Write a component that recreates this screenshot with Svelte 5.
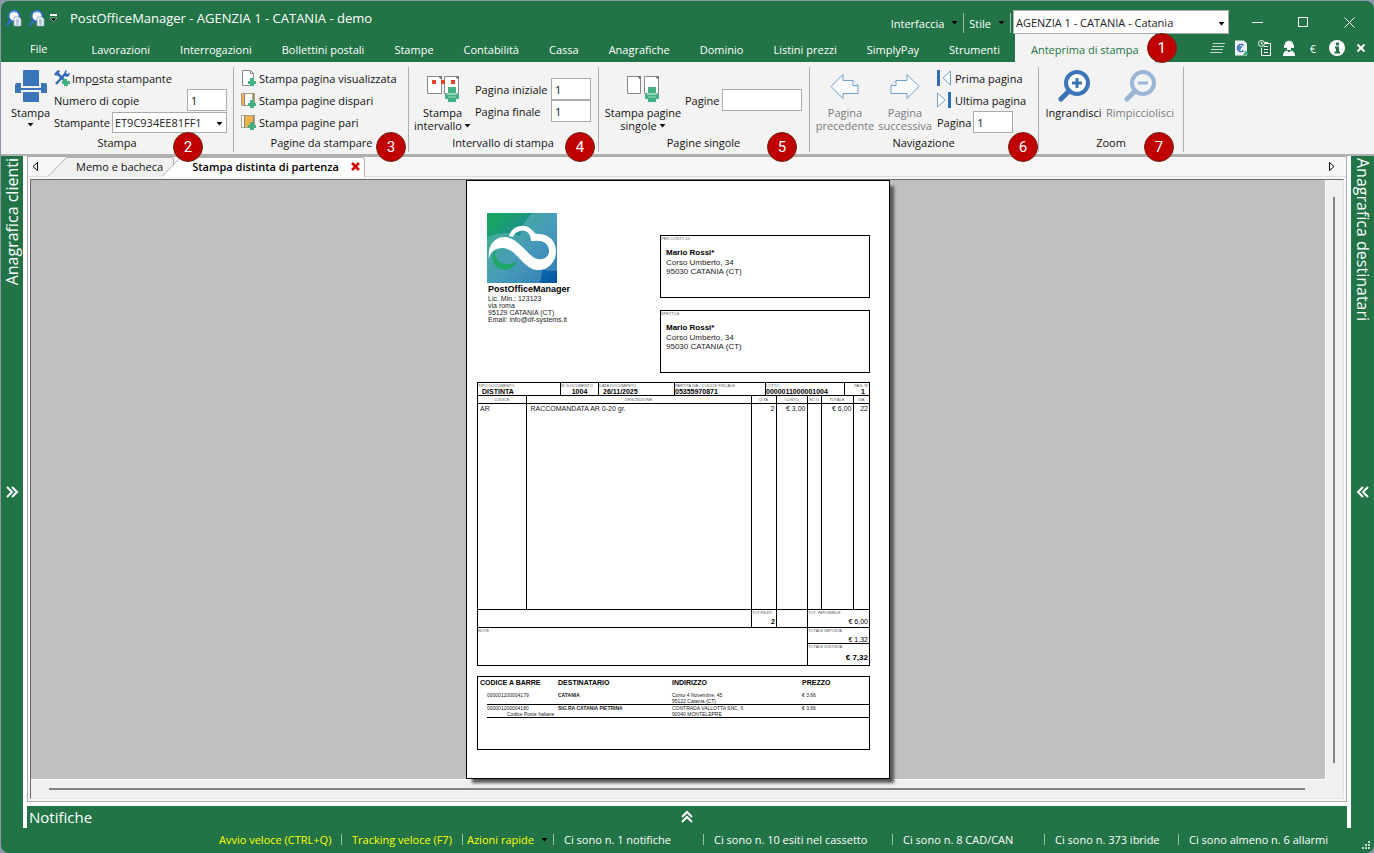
<script>
    const menuItems = [
        "Lavorazioni", "Interrogazioni", "Bollettini postali", "Stampe", "Contabilità", "Cassa",
        "Anagrafiche", "Dominio", "Listini prezzi", "SimplyPay", "Strumenti",
    ];

    let agency = $state("AGENZIA 1 - CATANIA - Catania");
    let printer = $state("ET9C934EE81FF1");
    let copies = $state("1");
    let firstPage = $state("1");
    let lastPage = $state("1");
    let singlePages = $state("");
    let currentPage = $state("1");

    const recipients = [{ label: "PER CONTO DI" }, { label: "SPETT.LE" }];

    const docHeader = [
        ["TIPO DOCUMENTO", "DISTINTA"],
        ["N° DOCUMENTO", "1004"],
        ["DATA DOCUMENTO", "26/11/2025"],
        ["PARTITA IVA - CODICE FISCALE", "05355970871"],
        ["LOTTO", "0000011000001004"],
        ["PAG. N°", "1"],
    ];

    const shipments = [
        { code: "000001200004179", note: "", name: "CATANIA", street: "Corso 4 Novembre, 45", city: "95122 Catania (CT)", price: "€ 3,66" },
        { code: "000001200004180", note: "Codice Poste Italiane", name: "SIG.RA CATANIA PIETRINA", street: "CONTRADA VALLOTTA SNC, 6", city: "90040 MONTELEPRE", price: "€ 3,66" },
    ];

    const statusItems = [
        "Ci sono n. 1 notifiche", "Ci sono n. 10 esiti nel cassetto", "Ci sono n. 8 CAD/CAN",
        "Ci sono n. 373 ibride", "Ci sono almeno n. 6 allarmi",
    ];
</script>

{#snippet arrow()}
    <svg class="arrow" width="7" height="4" viewBox="0 0 7 4"><path d="M0.5 0h6L3.5 3.5z" fill="currentColor" /></svg>
{/snippet}

{#snippet greenPrinter(x, y)}
    <g fill="#45b082" transform="translate({x} {y})">
        <path d="M3 0h8v6H3zM0 7h14v5H0zM3 10h8v5H3z" />
        <path d="M2 6.5h10v1H2zM3 10h8" stroke="#9ad4ba" />
    </g>
{/snippet}

{#snippet searchDoc()}
    <svg width="18" height="18" viewBox="0 0 18 18">
        <path d="M2 16l4-5" stroke="#2f6db5" stroke-width="3" stroke-linecap="round" />
        <circle cx="9" cy="7" r="5.5" fill="#fff" stroke="#2f6db5" stroke-width="2" />
        <path d="M7 4c1-1 3-1 4 0" stroke="#9ec3e8" fill="none" />
        <path d="M9 8h5l2 2v7H9z" fill="#eef3f8" stroke="#8ba6bd" stroke-width="0.8" />
        <path d="M11 11h3M11 13h3M11 15h3" stroke="#5d87b0" stroke-width="0.8" />
    </svg>
{/snippet}

{#snippet pageIcon(kind)}
    <svg width="16" height="16" viewBox="0 0 16 16">
        {#if kind === "one"}
            <path d="M1.5 0.5h8l3 3v12h-11z" fill="#fff" stroke="#888" />
            <path d="M9.5 0.5v3h3" fill="none" stroke="#888" />
        {:else}
            <path d="M0.5 1.500h13v12h-13z" fill="#fff" stroke="#b0a08a" />
            <path d={kind === "odd" ? "M1 2h3v11H1zM11 2h2v11h-2z" : "M3 2h9v11H3z"} fill="#f0b04c" />
            <path d="M3.500 1v13M12.500 1v12" stroke="#888" />
        {/if}
        <path d="M9 8h4v3h2v3h-2v2H9v-2H7v-3h2z" fill="#45b082" />
    </svg>
{/snippet}

{#snippet chevrons(turn)}
    <svg class="turn-{turn}" width="14" height="14" viewBox="0 0 14 14" fill="none" stroke="#fff" stroke-width="2">
        <path d="M2 2l5 5-5 5M7 2l5 5-5 5" />
    </svg>
{/snippet}

<div class="window">
    <header class="titlebar">
        <div class="quick">
            <button aria-label="Anteprima">{@render searchDoc()}</button>
            <button aria-label="Ricerca">{@render searchDoc()}</button>
            <button class="more" aria-label="Personalizza">
                <svg width="7" height="8" viewBox="0 0 7 8"><path d="M0 1h7" stroke="#fff" stroke-width="2" /><path d="M0 4h7L3.500 7.500z" fill="#000" stroke="#fff" stroke-width="0.5" /></svg>
            </button>
        </div>
        <h1>PostOfficeManager - AGENZIA 1 - CATANIA - demo</h1>
        <div class="options">
            <button class="option">Interfaccia {@render arrow()}</button>
            <button class="option">Stile {@render arrow()}</button>
            <div class="select agency">
                <select aria-label="Agenzia" bind:value={agency}>
                    <option>AGENZIA 1 - CATANIA - Catania</option>
                </select>
                {@render arrow()}
            </div>
        </div>
        <div class="controls">
            <button aria-label="Riduci"><svg width="11" height="11"><path d="M0 5.500h11" stroke="#fff" /></svg></button>
            <button aria-label="Ingrandisci finestra"><svg width="11" height="11"><path d="M0.500 0.500h9v9h-9z" stroke="#fff" fill="none" /></svg></button>
            <button aria-label="Chiudi"><svg width="11" height="11"><path d="M0.500 0.500l10 10M10.500 0.500l-10 10" stroke="#fff" /></svg></button>
        </div>
    </header>

    <nav class="menu">
        <button class="file">File</button>
        {#each menuItems as item}
            <button>{item}</button>
        {/each}
        <button class="active">Anteprima di stampa<span class="badge">1</span></button>
        <div class="tools">
            <button aria-label="Elenco"><svg width="15" height="10" viewBox="0 0 15 10"><path d="M3 0.500h12M2 3.500h12M1 6.500h12M0 9.500h12" stroke="#c4d8cc" /></svg></button>
            <button aria-label="Documento euro">
                <svg width="16" height="16" viewBox="0 0 16 16"><path d="M2 0.500h9l3 3v12H2z" fill="#eef4fa" /><path d="M10.500 5.500a3.500 3.500 0 1 0 0 5M4 7h5M4 9h4" stroke="#2f6db5" stroke-width="1.500" fill="none" /><path d="M10 15l2.500-5 3 5z" fill="#45b082" /></svg>
            </button>
            <button aria-label="Rapporti">
                <svg width="14" height="16" viewBox="0 0 14 16" fill="none" stroke="#fff"><circle cx="3.500" cy="3.500" r="3" /><path d="M3.500 2v2h1.500M9 3.500h3.500v12h-9V8M6 6.500h4M6 9.500h4M6 12.500h4" /><path d="M7 3h3" stroke-width="2" /></svg>
            </button>
            <button aria-label="Assistenza">
                <svg width="14" height="16" viewBox="0 0 14 16" fill="#fff"><circle cx="7" cy="5" r="3.500" /><path d="M3 5a4 4 0 0 1 8 0" fill="none" stroke="#fff" /><path d="M2 5h2v3H2zM10 5h2v3h-2zM5 8h4v2H5zM1 16c0-4 2-5 4-5.500l2 2 2-2c2 .5 4 1.500 4 5.500z" /></svg>
            </button>
            <button class="euro">€</button>
            <button aria-label="Informazioni">
                <svg width="16" height="16" viewBox="0 0 16 16"><circle cx="8" cy="8" r="8" fill="#fff" /><path d="M7 2.500h3v3H7zM6 6.500h4v5h1v2H5.500v-2H7v-3H6z" fill="#227447" /></svg>
            </button>
            <button aria-label="Chiudi scheda"><svg width="8" height="8"><path d="M0.500 0.500l7 7M7.500 0.500l-7 7" stroke="#fff" stroke-width="2" /></svg></button>
        </div>
    </nav>

    <section class="ribbon">
        <div class="group print">
            <div class="content">
                <button class="big">
                    <svg width="32" height="32" viewBox="0 0 32 32" fill="#3a76b7"><path d="M9 0h14a1 1 0 0 1 1 1v15H8V1a1 1 0 0 1 1-1z" /><path d="M2 13h4v5h20v-5h4a2 2 0 0 1 2 2v8h-6v-3H6v3H0v-8a2 2 0 0 1 2-2z" /><path d="M8 22h16v9a1 1 0 0 1-1 1H9a1 1 0 0 1-1-1z" /></svg>
                    <span>Stampa</span>
                    {@render arrow()}
                </button>
                <div class="rows">
                    <button class="row">
                        <svg width="16" height="16" viewBox="0 0 16 16"><path d="M2 14L12 3M3 3l9 9" stroke="#2f6db5" stroke-width="2.500" /><path d="M10 4l1-3 2-1-1 3 1 1 3-1-1 3-3 1zM0 4l4-4 2 1-1 2-3 3z" fill="#2f6db5" /><path d="M9 9h4v2h3v3h-2v2h-4v-2H8v-3h1z" fill="#45b082" /></svg>
                        <span>Imp<u>o</u>sta stampante</span>
                    </button>
                    <label class="row split">Numero di copie <input class="short" bind:value={copies} /></label>
                    <label class="row split">Stampante
                        <span class="select printer">
                            <select bind:value={printer}><option>ET9C934EE81FF1</option></select>
                            {@render arrow()}
                        </span>
                    </label>
                </div>
            </div>
            <h2>Stampa</h2>
            <span class="badge">2</span>
        </div>

        <div class="group pages">
            <div class="content">
                <div class="rows">
                    <button class="row">{@render pageIcon("one")}Stampa pagina visualizzata</button>
                    <button class="row">{@render pageIcon("odd")}Stampa pagine dispari</button>
                    <button class="row">{@render pageIcon("even")}Stampa pagine pari</button>
                </div>
            </div>
            <h2>Pagine da stampare</h2>
            <span class="badge">3</span>
        </div>

        <div class="group range">
            <div class="content">
                <button class="big">
                    <svg width="32" height="32" viewBox="0 0 32 32">
                        <path d="M0.500 6.500h11l3 3v14h-14zM17.500 6.500h11l3 3v14h-14z" fill="#fff" stroke="#888" />
                        <path d="M11 6h4v4zM28 6h4v4z" fill="#777" />
                        <path d="M5 10h4v4H5zM14 10h4v4h-4zM24 10h4v4h-4z" fill="#e2442a" />
                        {@render greenPrinter(18, 17)}
                    </svg>
                    <span>Stampa<br />intervallo{@render arrow()}</span>
                </button>
                <div class="rows middle">
                    <label class="row split">Pagina iniziale <input class="short" bind:value={firstPage} /></label>
                    <label class="row split">Pagina finale <input class="short" bind:value={lastPage} /></label>
                </div>
            </div>
            <h2>Intervallo di stampa</h2>
            <span class="badge">4</span>
        </div>

        <div class="group single">
            <div class="content">
                <button class="big">
                    <svg width="32" height="32" viewBox="0 0 32 32">
                        <path d="M0.500 6.500h10l3 3v14h-13zM17.500 6.500h11l3 3v14h-14z" fill="#fff" stroke="#888" />
                        <path d="M10 6h4v4zM28 6h4v4z" fill="#777" />
                        {@render greenPrinter(18, 17)}
                    </svg>
                    <span>Stampa pagine<br />singole{@render arrow()}</span>
                </button>
                <div class="rows middle">
                    <label class="row split">Pagine <input class="long" bind:value={singlePages} /></label>
                </div>
            </div>
            <h2>Pagine singole</h2>
            <span class="badge">5</span>
        </div>

        <div class="group navigation">
            <div class="content">
                <button class="big" disabled>
                    <svg width="32" height="32" viewBox="0 0 32 32" fill="#f8fafc" stroke="#6f9fd0"><path d="M2 16.500L14 4.500v6h10l5 5v8H14v5z" /><path d="M24 10.500v5h5" /></svg>
                    <span>Pagina<br />precedente</span>
                </button>
                <button class="big" disabled>
                    <svg width="32" height="32" viewBox="0 0 32 32" fill="#f8fafc" stroke="#6f9fd0"><path d="M30 16.500L18 4.500v6H7l-5 5v8h16v5z" /><path d="M7 10.500v5H2" /></svg>
                    <span>Pagina<br />successiva</span>
                </button>
                <div class="rows">
                    <button class="row"><svg width="16" height="16" viewBox="0 0 16 16"><path d="M1.500 0v16" stroke="#2f6db5" stroke-width="3" /><path d="M13.500 1v14L6 8z" fill="#fff" stroke="#6f9fd0" /></svg>Prima pagina</button>
                    <button class="row"><svg width="16" height="16" viewBox="0 0 16 16"><path d="M12.500 0v16" stroke="#2f6db5" stroke-width="3" /><path d="M0.500 1v14L8 8z" fill="#fff" stroke="#6f9fd0" /></svg>Ultima pagina</button>
                    <label class="row near">Pagina <input class="short" bind:value={currentPage} /></label>
                </div>
            </div>
            <h2>Navigazione</h2>
            <span class="badge">6</span>
        </div>

        <div class="group zoom">
            <div class="content">
                <button class="big">
                    <svg width="32" height="32" viewBox="0 0 32 32" fill="none" stroke="#3a76b7"><circle cx="19" cy="13" r="11" stroke-width="4" fill="#fff" /><path d="M11 21l-8 8" stroke-width="5" stroke-linecap="round" /><path d="M19 8v10M14 13h10" stroke-width="3" /></svg>
                    <span>Ingrandisci</span>
                </button>
                <button class="big" disabled>
                    <svg width="32" height="32" viewBox="0 0 32 32" fill="none" stroke="#9ab5d6"><circle cx="19" cy="13" r="11" stroke-width="4" /><path d="M11 21l-8 8" stroke-width="5" stroke-linecap="round" /><path d="M14 13h10" stroke-width="3" /></svg>
                    <span>Rimpicciolisci</span>
                </button>
            </div>
            <h2>Zoom</h2>
            <span class="badge">7</span>
        </div>
    </section>

    <div class="body">
        <aside class="side left">
            <span class="side-text">Anagrafica clienti</span>
            <button aria-label="Apri clienti">{@render chevrons("right")}</button>
        </aside>

        <main>
            <div class="panel">
                <div class="tabs">
                    <button class="scroll" aria-label="Schede precedenti"><svg width="6" height="9"><path d="M5.500 0.500v8L1 4.500z" fill="none" stroke="#000" /></svg></button>
                    <button class="tab">
                        <svg width="19" height="20" viewBox="0 0 19 20"><path d="M0 20L18 2l1-1.500V20z" fill="#f0f0f0" /><path d="M0 19.500L17 2q1-1.500 2-1.500" fill="none" stroke="#b4b4b4" /></svg>
                        <span>Memo e bacheca</span>
                    </button>
                    <button class="tab current">
                        <svg width="19" height="20" viewBox="0 0 19 20"><path d="M0 20L18 2l1-1.500V20z" fill="#fff" /><path d="M0 19.500L17 2q1-1.500 2-1.500" fill="none" stroke="#b4b4b4" /></svg>
                        <span>Stampa distinta di partenza <svg width="9" height="9"><path d="M1 1l7 7M8 1L1 8" stroke="#d00000" stroke-width="2.500" /></svg></span>
                    </button>
                    <button class="scroll end" aria-label="Schede successive"><svg width="6" height="9"><path d="M0.500 0.500v8L5 4.500z" fill="none" stroke="#000" /></svg></button>
                </div>

                <div class="preview">
                    <div class="canvas">
                        <article class="paper">
                            <div class="heading">
                                <div class="company">
                                    <svg width="70" height="70" viewBox="0 0 70 70">
                                        <defs>
                                            <linearGradient id="sky" x1="0" y1="0" x2="1" y2="1"><stop offset="0.1" stop-color="#17a463" /><stop offset="0.55" stop-color="#2484a8" /><stop offset="1" stop-color="#0055a5" /></linearGradient>
                                            <clipPath id="square"><path d="M0 0h70v70H0z" /></clipPath>
                                        </defs>
                                        <path d="M0 0h70v70H0z" fill="url(#sky)" />
                                        <g clip-path="url(#square)" fill="#8cc6dd" opacity="0.35"><circle cx="65" cy="26" r="32" /><circle cx="18" cy="57" r="37" /></g>
                                        <path d="M9 36c-3 7 2 15 10 15 5 0 9-1 12-3-3 6-8 9-13 9C8 57 1 46 9 36z" fill="#20a66a" />
                                        <path d="M2 46C0 32 8 24 17 24c12 0 21 14 29 20 8 5 16 1 16-6 0-8-7-11-15-10h-3c0-8-6-12-11-10-4 1-6 3-7 6l-4-1c3-11 16-13 22-7 3 3 4 5 7 5 11 0 18 7 18 17 0 12-9 20-19 19C36 56 30 36 16 35 8 35 3 39 2 46z" fill="#fff" />
                                    </svg>
                                    <strong>PostOfficeManager</strong>
                                    <p>Lic. Min.: 123123</p>
                                    <p>via roma</p>
                                    <p>95129 CATANIA (CT)</p>
                                    <p>Email: info@df-systems.it</p>
                                </div>
                                <div class="addresses">
                                    {#each recipients as recipient}
                                        <div class="address">
                                            <small>{recipient.label}</small>
                                            <strong>Mario Rossi*</strong>
                                            <p>Corso Umberto, 34</p>
                                            <p>95030 CATANIA (CT)</p>
                                        </div>
                                    {/each}
                                </div>
                            </div>

                            <div class="document">
                                <dl>
                                    {#each docHeader as [label, value]}
                                        <div><dt>{label}</dt><dd>{value}</dd></div>
                                    {/each}
                                </dl>
                                <table>
                                    <colgroup><col class="w48" /><col /><col class="w25" /><col class="w31" /><col class="w14" /><col class="w32" /><col class="w16" /></colgroup>
                                    <thead>
                                        <tr><th>CODICE</th><th>DESCRIZIONE</th><th>Q.TA</th><th>COSTO</th><th>SC.%</th><th>TOTALE</th><th>IVA</th></tr>
                                    </thead>
                                    <tbody>
                                        <tr><td>AR</td><td>RACCOMANDATA AR 0-20 gr.</td><td class="num">2</td><td class="num">€ 3,00</td><td></td><td class="num">€ 6,00</td><td class="num">22</td></tr>
                                    </tbody>
                                </table>
                                <div class="totals">
                                    <div class="pieces-row">
                                        <div></div>
                                        <div><small>TOT.PEZZI</small><b>2</b></div>
                                        <div></div>
                                    </div>
                                    <div class="notes"><small>NOTE</small></div>
                                    <div class="sums">
                                        <div><small>TOT. IMPONIBILE</small><span>€ 6,00</span></div>
                                        <div><small>TOTALE IMPOSTA</small><span>€ 1,32</span></div>
                                        <div><small>TOTALE DISTINTA</small><b class="grand">€ 7,32</b></div>
                                    </div>
                                </div>
                            </div>

                            <div class="shipments">
                                <div class="shipment titles"><b>CODICE A BARRE</b><b>DESTINATARIO</b><b>INDIRIZZO</b><b>PREZZO</b></div>
                                {#each shipments as item}
                                    <div class="shipment">
                                        <div>{item.code}<br /><span class="note">{item.note}</span></div>
                                        <b>{item.name}</b>
                                        <div>{item.street}<br />{item.city}</div>
                                        <div>{item.price}</div>
                                    </div>
                                {/each}
                            </div>
                        </article>
                    </div>
                    <div class="vbar"><i></i></div>
                    <div class="hbar"><i></i></div>
                </div>
            </div>
            <div class="notices">
                <span>Notifiche</span>
                <button aria-label="Apri notifiche">{@render chevrons("up")}</button>
            </div>
        </main>

        <aside class="side right">
            <span class="side-text">Anagrafica destinatari</span>
            <button aria-label="Apri destinatari">{@render chevrons("left")}</button>
        </aside>
    </div>

    <footer class="status">
        <a href="#avvio">Avvio veloce (CTRL+Q)</a>
        <a href="#tracking">Tracking veloce (F7)</a>
        <button class="quick-actions">Azioni rapide {@render arrow()}</button>
        {#each statusItems as item}
            <span>{item}</span>
        {/each}
        <svg class="grip" width="9" height="9" viewBox="0 0 9 9" fill="#c8d8ce"><path d="M6 0h2v2H6zM3 3h2v2H3zM6 3h2v2H6zM0 6h2v2H0zM3 6h2v2H3zM6 6h2v2H6z" /></svg>
    </footer>
</div>

<style>
    :global(body) {
        background: #8d98ad;
    }

    .window, .window * {
        box-sizing: border-box;
    }

    .window {
        display: flex;
        flex-direction: column;
        min-height: 100vh;
        padding: 1px 0 0 1px;
        font: 11px/13px "Open Sans", "Noto Sans", sans-serif;
        color: #111;
    }

    .window svg {
        display: block;
        flex: none;
    }

    button, input, select {
        font: inherit;
        color: inherit;
        margin: 0;
    }

    button {
        padding: 0;
        border: 0;
        background: none;
        white-space: nowrap;
    }

    h1, h2, p, dl, dd {
        margin: 0;
        font-weight: normal;
    }

    /* title bar */
    .titlebar {
        display: flex;
        height: 33px;
        padding-left: 4px;
        background: #227447;
        border-radius: 8px 8px 0 0;
        color: #fff;
    }

    .quick {
        display: flex;
        align-items: center;
        gap: 5px;
        width: 65px;
    }

    .quick .more {
        margin-left: -1px;
    }

    h1 {
        font-size: 13px;
        line-height: 34px;
        white-space: nowrap;
    }

    .options {
        display: flex;
        align-items: flex-end;
        margin-left: auto;
    }

    .option {
        display: flex;
        align-items: center;
        gap: 7px;
        height: 20px;
        margin-bottom: 1px;
        padding: 0 5px;
        border-right: 1px solid #9dbdab;
        font-weight: 500;
    }

    .option :global(.arrow) {
        color: #000;
    }

    .select {
        position: relative;
        display: block;
        color: #222;
    }

    .select select {
        appearance: none;
        display: block;
        width: 100%;
        border: 1px solid #ababab;
        border-radius: 0;
        background: #fff;
        padding: 0 16px 0 2px;
    }

    .select :global(.arrow) {
        position: absolute;
        right: 4px;
        top: 50%;
        color: #000;
        pointer-events: none;
    }

    .agency {
        width: 216px;
        margin-left: 2px;
    }

    .agency select {
        height: 24px;
    }

    .controls {
        display: flex;
        margin: 10px 2px 0 5px;
    }

    .controls button {
        display: grid;
        place-items: center;
        width: 46px;
        height: 23px;
    }

    /* menu */
    .menu {
        display: flex;
        height: 28px;
        background: #227447;
        color: #fff;
    }

    .menu > button {
        padding: 2px 15px 0;
        font-weight: 500;
    }

    .menu > .file {
        padding: 0 29px;
    }

    .menu > .active {
        position: relative;
        padding: 2px 16px 0;
        background: #f3f3f3;
        color: #227447;
        font-weight: normal;
    }

    .badge {
        position: absolute;
        right: 30px;
        bottom: -10px;
        display: grid;
        place-items: center;
        width: 30px;
        height: 30px;
        border: 1px solid #6b2a12;
        border-radius: 50%;
        background: #c00000;
        color: #fff;
        font-family: Roboto, sans-serif;
        font-size: 15px;
        line-height: 16px;
    }

    .menu .badge {
        right: -22px;
        bottom: -1px;
    }

    .tools {
        display: flex;
        margin-left: auto;
        padding-right: 1px;
    }

    .tools button {
        display: grid;
        place-items: center;
        width: 24px;
    }

    /* ribbon */
    .ribbon {
        display: flex;
        padding: 5px 0 2px;
        background: #f3f3f3;
        border-bottom: 2px solid #b0b0b0;
    }

    .group {
        position: relative;
        display: flex;
        flex-direction: column;
        justify-content: space-between;
        height: 85px;
        border-right: 1px solid #b0b0b0;
    }

    .group h2 {
        padding-right: 6px;
        font-size: 11px;
        line-height: 18px;
        text-align: center;
    }

    .content {
        display: flex;
        height: 66px;
    }

    .print { width: 233px; padding-left: 6px; }
    .pages { width: 175px; padding-left: 7px; }
    .range { width: 190px; padding-left: 5px; }
    .single { width: 211px; padding-left: 5px; }
    .navigation { width: 229px; padding-left: 5px; }
    .zoom { width: 145px; padding-left: 6px; }

    .pages .badge { right: 2px; }
    .range .badge { right: 3px; }
    .single .badge { right: 12px; }
    .navigation .badge { right: 0; }
    .zoom .badge { right: 9px; }

    .big {
        display: flex;
        flex-direction: column;
        align-items: center;
        padding-top: 3px;
    }

    .big > span {
        margin-top: 4px;
    }

    .big > :global(.arrow) {
        margin-top: 4px;
    }

    .big span :global(.arrow) {
        display: inline-block;
        margin-left: 2px;
        vertical-align: 2px;
    }

    .big:disabled {
        color: #7a7a7a;
    }

    .print .big { width: 47px; }
    .range .big { width: 57px; }
    .single .big { width: 78px; }
    .navigation .big { width: 60px; }
    .navigation .big + .rows { margin-left: 2px; }
    .zoom .big:first-child { width: 57px; }
    .zoom .big:last-child { width: 76px; }

    .rows {
        display: flex;
        flex-direction: column;
        white-space: nowrap;
    }

    .print .rows { width: 173px; }
    .range .rows { width: 116px; margin-left: 4px; }
    .single .rows { width: 117px; margin-left: 3px; }

    .rows.middle {
        justify-content: center;
    }

    .row {
        display: flex;
        align-items: center;
        gap: 2px;
        height: 22px;
    }

    .split {
        justify-content: space-between;
    }

    .row input {
        height: 22px;
        border: 1px solid #ababab;
        background: #fff;
        padding: 0 3px;
        outline: none;
    }

    .short { width: 40px; }
    .long { width: 80px; }

    .printer {
        width: 116px;
    }

    .printer select {
        height: 21px;
    }

    /* body */
    .body {
        display: flex;
        flex: 1;
        background: #fff;
    }

    .side {
        display: grid;
        grid-template-rows: 1fr auto 1fr;
        justify-items: center;
        width: 22px;
        background: #227447;
        color: #fff;
    }

    .side.right {
        width: 23px;
    }

    .side-text {
        writing-mode: vertical-rl;
        font-size: 16px;
        line-height: 22px;
        white-space: nowrap;
        padding: 2px 0;
    }

    .left .side-text {
        align-self: start;
        transform: rotate(180deg);
    }

    .turn-left { transform: rotate(180deg); }
    .turn-up { transform: rotate(-90deg); }

    main {
        display: flex;
        flex: 1;
        flex-direction: column;
        min-width: 0;
        margin: 0 4px;
    }

    .panel {
        display: flex;
        flex: 1;
        flex-direction: column;
        margin-bottom: 4px;
        border: 1px solid #ababab;
        background: #f7f7f7;
    }

    .tabs {
        display: flex;
        height: 20px;
        border-bottom: 1px solid #ddd;
    }

    .scroll {
        width: 16px;
        padding-left: 4px;
    }

    .scroll.end {
        margin-left: auto;
        width: 21px;
    }

    .tab {
        display: flex;
        margin-left: 4px;
    }

    .tab > span {
        display: flex;
        align-items: center;
        gap: 12px;
        height: 20px;
        padding: 0 10px 2px 9px;
        border-top: 1px solid #b4b4b4;
        border-right: 1px solid #b4b4b4;
        border-radius: 0 3px 0 0;
        background: #f0f0f0;
    }

    .tab.current {
        margin-left: -12px;
        font-weight: 600;
        color: #000;
    }

    .tab.current > span {
        padding: 0 4px 2px 11px;
        background: #fff;
    }

    .preview {
        flex: 1;
        display: grid;
        grid-template-columns: 1fr 17px;
        grid-template-rows: 1fr 18px;
        margin: 2px;
        border: 1px solid #e3e3e3;
        border-top: 1px solid #696969;
        border-left: 1px solid #696969;
        background: #f0f0f0;
    }

    .canvas {
        display: flex;
        justify-content: center;
        background: #c0c0c0;
        border-right: 1px solid #fff;
        border-bottom: 1px solid #fff;
    }

    .vbar {
        padding: 17px 0 17px 7px;
    }

    .vbar i {
        display: block;
        width: 2px;
        height: 100%;
        background: #858585;
    }

    .hbar {
        padding: 8px 0 0 18px;
        margin-right: 21px;
    }

    .hbar i {
        display: block;
        height: 2px;
        background: #858585;
    }

    .notices {
        display: grid;
        grid-template-columns: 1fr auto 1fr;
        align-items: center;
        height: 22px;
        padding: 0 2px;
        background: #227447;
        color: #fff;
        font-size: 15px;
        line-height: 22px;
    }

    /* paper */
    .paper {
        width: 424px;
        min-height: 599px;
        padding: 32px 19px 0 10px;
        border: 1px solid #000;
        background: #fff;
        box-shadow: 5px 5px 3px -1px #555;
        font: 7px/8px "Liberation Sans", Arial, sans-serif;
        color: #222;
    }

    .paper small, .paper dt, .paper th {
        display: block;
        font-size: 4px;
        line-height: 6px;
        font-weight: normal;
        color: #555;
        white-space: nowrap;
    }

    .heading {
        display: flex;
        justify-content: space-between;
        height: 169px;
    }

    .company {
        padding-left: 10px;
        line-height: 7px;
    }

    .company p {
        padding-left: 1px;
    }

    .company strong {
        display: block;
        padding-left: 1px;
        font-size: 9px;
        line-height: 12px;
        color: #000;
    }

    .addresses {
        display: grid;
        gap: 12px;
        align-content: start;
        padding-top: 22px;
    }

    .address {
        width: 210px;
        height: 63px;
        border: 1px solid #000;
        font-size: 8px;
        line-height: 9px;
    }

    .address strong {
        display: block;
        margin-top: 5px;
        padding-left: 5px;
        line-height: 11px;
        color: #000;
    }

    .address p {
        padding-left: 5px;
    }

    .document {
        border: 1px solid #000;
    }

    dl {
        display: grid;
        grid-template-columns: 82px 38px 76px 91px 79px 1fr;
        height: 13px;
        border-bottom: 1px solid #000;
        color: #000;
    }

    dl div + div {
        border-left: 1px solid #000;
    }

    .paper dt {
        line-height: 5px;
    }

    dd {
        font-weight: bold;
        line-height: 8px;
    }

    dl div:nth-child(1) dd { padding-left: 4px; }
    dl div:nth-child(2) dd { text-align: center; }
    dl div:nth-child(3) dd { padding-left: 4px; }
    dl div:nth-child(6) { text-align: right; }
    dl div:nth-child(6) dd { padding-right: 4px; }

    table {
        width: 100%;
        border-collapse: collapse;
        table-layout: fixed;
    }

    .w48 { width: 48px; }
    .w25 { width: 25px; }
    .w31 { width: 31px; }
    .w14 { width: 14px; }
    .w32 { width: 32px; }
    .w16 { width: 16px; }

    .paper th {
        display: table-cell;
        padding: 1px 0 0;
        border-bottom: 1px solid #000;
        text-align: center;
    }

    th + th, td + td {
        border-left: 1px solid #000;
    }

    td {
        height: 205px;
        padding: 1px 1px 0 2px;
        vertical-align: top;
        white-space: nowrap;
    }

    td:nth-child(2) { padding-left: 4px; }
    .num { text-align: right; padding-left: 0; }

    .totals {
        display: grid;
        grid-template-columns: 1fr 62px;
        grid-template-rows: 18px 37px;
        border-top: 1px solid #000;
    }

    .pieces-row {
        display: grid;
        grid-template-columns: 1fr 25px 31px;
        border-bottom: 1px solid #000;
    }

    .pieces-row div + div {
        border-left: 1px solid #000;
    }

    .totals b, .totals span {
        display: block;
        padding: 2px 1px 0 0;
        text-align: right;
        color: #000;
    }

    .notes {
        grid-row: 2;
    }

    .sums {
        grid-column: 2;
        grid-row: 1 / 3;
        display: grid;
        grid-template-rows: 17px 16px 1fr;
        border-left: 1px solid #000;
    }

    .sums div + div {
        border-top: 1px solid #000;
    }

    .totals .grand {
        padding-top: 4px;
        font-size: 8px;
    }

    .shipments {
        height: 74px;
        margin-top: 10px;
        border: 1px solid #000;
        font-size: 5px;
        line-height: 6px;
    }

    .shipment {
        display: grid;
        grid-template-columns: 71px 114px 130px 1fr;
        height: 13px;
        margin-left: 9px;
        border-bottom: 1px solid #000;
        white-space: nowrap;
    }

    .shipment.titles {
        grid-template-columns: 78px 114px 130px 1fr;
        height: 15px;
        margin-left: 2px;
        border: 0;
        font-size: 7px;
        line-height: 11px;
        color: #000;
    }

    .note {
        padding-left: 20px;
    }

    /* status bar */
    .status {
        position: relative;
        display: grid;
        grid-template-columns: 133px 121px 91px 150px 189px 152px 134px 196px;
        justify-content: end;
        align-items: center;
        height: 25px;
        padding-bottom: 2px;
        background: #227447;
        border-radius: 0 0 8px 8px;
        color: #fff;
        white-space: nowrap;
    }

    .status > * {
        padding-left: 10px;
        border-left: 1px solid #9dbdab;
        line-height: 11px;
    }

    .status > a:first-child {
        border-left: 0;
        padding-left: 11px;
    }

    .status a, .quick-actions {
        color: #ffff00;
        text-decoration: none;
    }

    .status .quick-actions {
        display: flex;
        align-items: center;
        gap: 7px;
        padding-left: 4px;
    }

    .quick-actions :global(.arrow) {
        color: #000;
    }

    .status .grip {
        position: absolute;
        right: 3px;
        bottom: 3px;
        padding: 0;
        border: 0;
    }
</style>
